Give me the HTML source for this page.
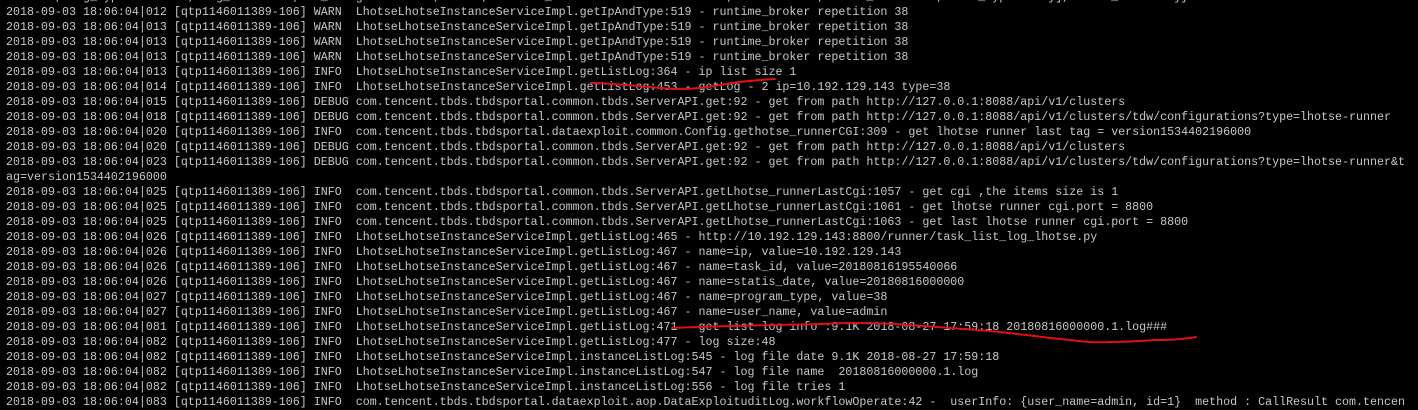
<!DOCTYPE html>
<html><head><meta charset="utf-8"><style>
html,body{margin:0;padding:0;background:#000;width:1418px;height:409px;overflow:hidden}
pre{position:absolute;left:6px;top:-10.5px;margin:0;font-family:"Liberation Mono",monospace;font-size:11.67px;line-height:15px;color:#c8c8c8;white-space:pre}
svg{position:absolute;left:0;top:0}
</style></head><body>
<pre>ession', log_type : 'INFO', log_date : '', in_charge : 'admin;admin', runtime_broker : '10.192.129.143', state : '1', start_times : 0, task_type : 38}], total_count :1}}
2018-09-03 18:06:04|012 [qtp1146011389-106] WARN  LhotseLhotseInstanceServiceImpl.getIpAndType:519 - runtime_broker repetition 38
2018-09-03 18:06:04|013 [qtp1146011389-106] WARN  LhotseLhotseInstanceServiceImpl.getIpAndType:519 - runtime_broker repetition 38
2018-09-03 18:06:04|013 [qtp1146011389-106] WARN  LhotseLhotseInstanceServiceImpl.getIpAndType:519 - runtime_broker repetition 38
2018-09-03 18:06:04|013 [qtp1146011389-106] WARN  LhotseLhotseInstanceServiceImpl.getIpAndType:519 - runtime_broker repetition 38
2018-09-03 18:06:04|013 [qtp1146011389-106] INFO  LhotseLhotseInstanceServiceImpl.getListLog:364 - ip list size 1
2018-09-03 18:06:04|014 [qtp1146011389-106] INFO  LhotseLhotseInstanceServiceImpl.getListLog:453 - getLog - 2 ip=10.192.129.143 type=38
2018-09-03 18:06:04|015 [qtp1146011389-106] DEBUG com.tencent.tbds.tbdsportal.common.tbds.ServerAPI.get:92 - get from path http://127.0.0.1:8088/api/v1/clusters
2018-09-03 18:06:04|018 [qtp1146011389-106] DEBUG com.tencent.tbds.tbdsportal.common.tbds.ServerAPI.get:92 - get from path http://127.0.0.1:8088/api/v1/clusters/tdw/configurations?type=lhotse-runner
2018-09-03 18:06:04|020 [qtp1146011389-106] INFO  com.tencent.tbds.tbdsportal.dataexploit.common.Config.gethotse_runnerCGI:309 - get lhotse runner last tag = version1534402196000
2018-09-03 18:06:04|020 [qtp1146011389-106] DEBUG com.tencent.tbds.tbdsportal.common.tbds.ServerAPI.get:92 - get from path http://127.0.0.1:8088/api/v1/clusters
2018-09-03 18:06:04|023 [qtp1146011389-106] DEBUG com.tencent.tbds.tbdsportal.common.tbds.ServerAPI.get:92 - get from path http://127.0.0.1:8088/api/v1/clusters/tdw/configurations?type=lhotse-runner&amp;t
ag=version1534402196000
2018-09-03 18:06:04|025 [qtp1146011389-106] INFO  com.tencent.tbds.tbdsportal.common.tbds.ServerAPI.getLhotse_runnerLastCgi:1057 - get cgi ,the items size is 1
2018-09-03 18:06:04|025 [qtp1146011389-106] INFO  com.tencent.tbds.tbdsportal.common.tbds.ServerAPI.getLhotse_runnerLastCgi:1061 - get lhotse runner cgi.port = 8800
2018-09-03 18:06:04|025 [qtp1146011389-106] INFO  com.tencent.tbds.tbdsportal.common.tbds.ServerAPI.getLhotse_runnerLastCgi:1063 - get last lhotse runner cgi.port = 8800
2018-09-03 18:06:04|026 [qtp1146011389-106] INFO  LhotseLhotseInstanceServiceImpl.getListLog:465 - http://10.192.129.143:8800/runner/task_list_log_lhotse.py
2018-09-03 18:06:04|026 [qtp1146011389-106] INFO  LhotseLhotseInstanceServiceImpl.getListLog:467 - name=ip, value=10.192.129.143
2018-09-03 18:06:04|026 [qtp1146011389-106] INFO  LhotseLhotseInstanceServiceImpl.getListLog:467 - name=task_id, value=20180816195540066
2018-09-03 18:06:04|026 [qtp1146011389-106] INFO  LhotseLhotseInstanceServiceImpl.getListLog:467 - name=statis_date, value=20180816000000
2018-09-03 18:06:04|027 [qtp1146011389-106] INFO  LhotseLhotseInstanceServiceImpl.getListLog:467 - name=program_type, value=38
2018-09-03 18:06:04|027 [qtp1146011389-106] INFO  LhotseLhotseInstanceServiceImpl.getListLog:467 - name=user_name, value=admin
2018-09-03 18:06:04|081 [qtp1146011389-106] INFO  LhotseLhotseInstanceServiceImpl.getListLog:471 - get list log info :9.1K 2018-08-27 17:59:18 20180816000000.1.log###
2018-09-03 18:06:04|082 [qtp1146011389-106] INFO  LhotseLhotseInstanceServiceImpl.getListLog:477 - log size:48
2018-09-03 18:06:04|082 [qtp1146011389-106] INFO  LhotseLhotseInstanceServiceImpl.instanceListLog:545 - log file date 9.1K 2018-08-27 17:59:18
2018-09-03 18:06:04|082 [qtp1146011389-106] INFO  LhotseLhotseInstanceServiceImpl.instanceListLog:547 - log file name  20180816000000.1.log
2018-09-03 18:06:04|082 [qtp1146011389-106] INFO  LhotseLhotseInstanceServiceImpl.instanceListLog:556 - log file tries 1
2018-09-03 18:06:04|083 [qtp1146011389-106] INFO  com.tencent.tbds.tbdsportal.dataexploit.aop.DataExploituditLog.workflowOperate:42 -  userInfo: {user_name=admin, id=1}  method : CallResult com.tencen</pre>
<svg width="1418" height="409"><g fill="none" stroke="#e01010" stroke-width="2" stroke-linecap="round">
<path d="M591 83 C620 84 640 86 660 88 C680 90 700 89 720 85 C740 81 760 80 775 79"/>
<path d="M672 328 C720 326 780 325 820 324 C850 322 880 323 910 325 C940 327 960 329 990 331 C1020 334 1040 337 1060 339 C1080 341 1090 343 1110 342 C1130 342 1140 341 1155 340 C1175 340 1185 339 1196 337"/>
</g></svg>
</body></html>
